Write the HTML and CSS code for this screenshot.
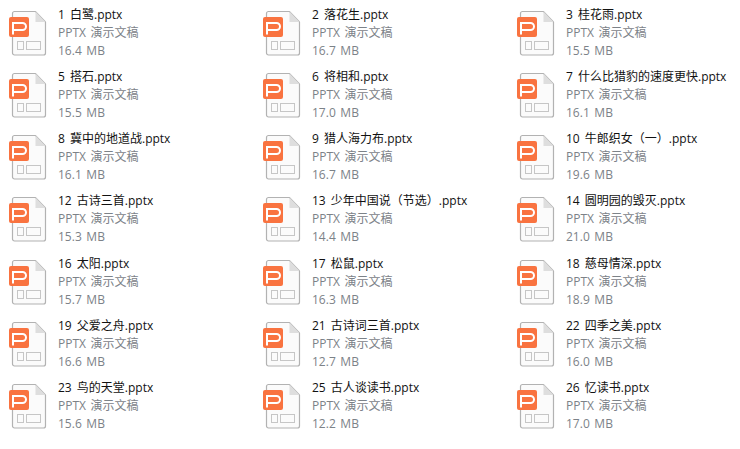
FILE: index.html
```html
<!DOCTYPE html>
<html lang="zh-CN">
<head>
    <meta charset="UTF-8">
    <title>PPTX 文件列表</title>
    <link rel="stylesheet" href="styles.css">
</head>
<body>
    <svg class="sprite" width="0" height="0">
        <symbol id="ppt-icon" viewBox="0 0 40 46">
            <path d="M5.5 1.5H26.5L36.5 12V43a2 2 0 0 1-2 2H5.5a2 2 0 0 1-2-2V3.5a2 2 0 0 1 2-2z" fill="#fbfbfb" stroke="#b2b2b2" stroke-width="1.2"/>
            <path d="M26.5 1.5V12H36.5z" fill="#dedede"/>
            <rect x="8.5" y="31.5" width="6" height="8" fill="none" stroke="#c6c6c6"/>
            <rect x="17.5" y="31.5" width="14" height="8" fill="none" stroke="#c6c6c6"/>
            <rect x="0" y="7" width="20" height="20" rx="2" fill="#f97340"/>
            <path d="M4 24.5V13H13.5a3.5 3.5 0 0 1 0 7H4" fill="none" stroke="#fff" stroke-width="2"/>
        </symbol>
    </svg>
    <div class="file-grid">
        <div class="file"><svg class="icon"><use href="#ppt-icon"/></svg><div class="info"><div class="name">1 白鹭.pptx</div><div class="meta">PPTX 演示文稿</div><div class="meta">16.4 MB</div></div></div>
        <div class="file"><svg class="icon"><use href="#ppt-icon"/></svg><div class="info"><div class="name">2 落花生.pptx</div><div class="meta">PPTX 演示文稿</div><div class="meta">16.7 MB</div></div></div>
        <div class="file"><svg class="icon"><use href="#ppt-icon"/></svg><div class="info"><div class="name">3 桂花雨.pptx</div><div class="meta">PPTX 演示文稿</div><div class="meta">15.5 MB</div></div></div>

        <div class="file"><svg class="icon"><use href="#ppt-icon"/></svg><div class="info"><div class="name">5 搭石.pptx</div><div class="meta">PPTX 演示文稿</div><div class="meta">15.5 MB</div></div></div>
        <div class="file"><svg class="icon"><use href="#ppt-icon"/></svg><div class="info"><div class="name">6 将相和.pptx</div><div class="meta">PPTX 演示文稿</div><div class="meta">17.0 MB</div></div></div>
        <div class="file"><svg class="icon"><use href="#ppt-icon"/></svg><div class="info"><div class="name">7 什么比猎豹的速度更快.pptx</div><div class="meta">PPTX 演示文稿</div><div class="meta">16.1 MB</div></div></div>

        <div class="file"><svg class="icon"><use href="#ppt-icon"/></svg><div class="info"><div class="name">8 冀中的地道战.pptx</div><div class="meta">PPTX 演示文稿</div><div class="meta">16.1 MB</div></div></div>
        <div class="file"><svg class="icon"><use href="#ppt-icon"/></svg><div class="info"><div class="name">9 猎人海力布.pptx</div><div class="meta">PPTX 演示文稿</div><div class="meta">16.7 MB</div></div></div>
        <div class="file"><svg class="icon"><use href="#ppt-icon"/></svg><div class="info"><div class="name">10 牛郎织女（一）.pptx</div><div class="meta">PPTX 演示文稿</div><div class="meta">19.6 MB</div></div></div>

        <div class="file"><svg class="icon"><use href="#ppt-icon"/></svg><div class="info"><div class="name">12 古诗三首.pptx</div><div class="meta">PPTX 演示文稿</div><div class="meta">15.3 MB</div></div></div>
        <div class="file"><svg class="icon"><use href="#ppt-icon"/></svg><div class="info"><div class="name">13 少年中国说（节选）.pptx</div><div class="meta">PPTX 演示文稿</div><div class="meta">14.4 MB</div></div></div>
        <div class="file"><svg class="icon"><use href="#ppt-icon"/></svg><div class="info"><div class="name">14 圆明园的毁灭.pptx</div><div class="meta">PPTX 演示文稿</div><div class="meta">21.0 MB</div></div></div>

        <div class="file"><svg class="icon"><use href="#ppt-icon"/></svg><div class="info"><div class="name">16 太阳.pptx</div><div class="meta">PPTX 演示文稿</div><div class="meta">15.7 MB</div></div></div>
        <div class="file"><svg class="icon"><use href="#ppt-icon"/></svg><div class="info"><div class="name">17 松鼠.pptx</div><div class="meta">PPTX 演示文稿</div><div class="meta">16.3 MB</div></div></div>
        <div class="file"><svg class="icon"><use href="#ppt-icon"/></svg><div class="info"><div class="name">18 慈母情深.pptx</div><div class="meta">PPTX 演示文稿</div><div class="meta">18.9 MB</div></div></div>

        <div class="file"><svg class="icon"><use href="#ppt-icon"/></svg><div class="info"><div class="name">19 父爱之舟.pptx</div><div class="meta">PPTX 演示文稿</div><div class="meta">16.6 MB</div></div></div>
        <div class="file"><svg class="icon"><use href="#ppt-icon"/></svg><div class="info"><div class="name">21 古诗词三首.pptx</div><div class="meta">PPTX 演示文稿</div><div class="meta">12.7 MB</div></div></div>
        <div class="file"><svg class="icon"><use href="#ppt-icon"/></svg><div class="info"><div class="name">22 四季之美.pptx</div><div class="meta">PPTX 演示文稿</div><div class="meta">16.0 MB</div></div></div>

        <div class="file"><svg class="icon"><use href="#ppt-icon"/></svg><div class="info"><div class="name">23 鸟的天堂.pptx</div><div class="meta">PPTX 演示文稿</div><div class="meta">15.6 MB</div></div></div>
        <div class="file"><svg class="icon"><use href="#ppt-icon"/></svg><div class="info"><div class="name">25 古人谈读书.pptx</div><div class="meta">PPTX 演示文稿</div><div class="meta">12.2 MB</div></div></div>
        <div class="file"><svg class="icon"><use href="#ppt-icon"/></svg><div class="info"><div class="name">26 忆读书.pptx</div><div class="meta">PPTX 演示文稿</div><div class="meta">17.0 MB</div></div></div>
    </div>
</body>
</html>
```

FILE: styles.css
```css
* { margin: 0; padding: 0; box-sizing: border-box; }

body {
    background: #fff;
    font-family: "Open Sans", "Noto Sans CJK SC", sans-serif;
    font-size: 12px;
    overflow: hidden;
}

.sprite {
    display: block;
}

.file-grid {
    display: grid;
    grid-template-columns: repeat(3, 254px);
    grid-auto-rows: 62.17px;
    padding: 6px 0 0 9px;
}

.file {
    display: flex;
    align-items: flex-start;
}

.icon {
    width: 40px;
    height: 46px;
    margin: 4px 9px 0 0;
    flex-shrink: 0;
}

.info {
    line-height: 18px;
}

.name {
    color: #111;
    white-space: nowrap;
    word-spacing: 2px;
}

.meta {
    color: #7c8288;
    white-space: nowrap;
    word-spacing: 1.5px;
}
```
